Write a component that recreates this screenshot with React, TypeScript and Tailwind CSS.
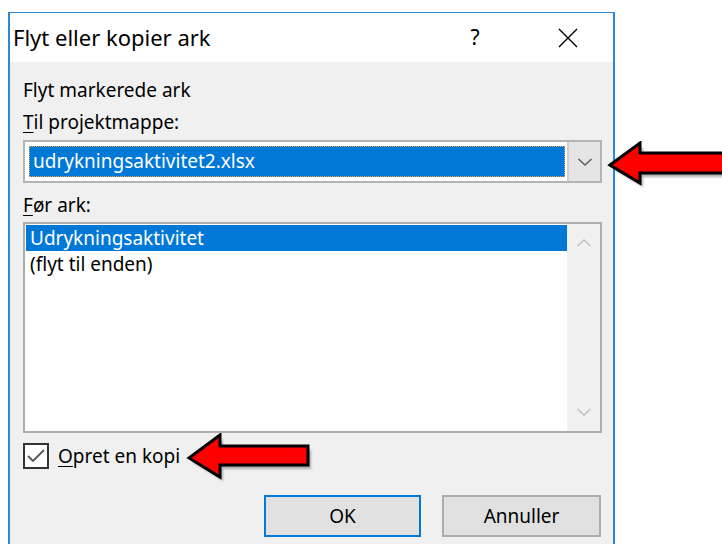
import React from "react";

function Chevron({ dir, color = "#606060" }: { dir: "up" | "down"; color?: string }) {
  return (
    <svg width="16" height="10" viewBox="0 0 16 10">
      <path
        d={dir === "down" ? "M1.5 2 L8 8 L14.5 2" : "M1.5 8 L8 2 L14.5 8"}
        fill="none"
        stroke={color}
        strokeWidth="1.6"
      />
    </svg>
  );
}

function Arrow({ id, w, h, tip, headX, shaftTop, shaftBottom }: { id: string; w: number; h: number; tip: number; headX: number; shaftTop: number; shaftBottom: number }) {
  const mid = h / 2;
  const pts = `${tip},${mid} ${headX},2 ${headX},${shaftTop} ${w - 6},${shaftTop} ${w - 6},${shaftBottom} ${headX},${shaftBottom} ${headX},${h - 6} `;
  return (
    <svg width={w} height={h} viewBox={`0 0 ${w} ${h}`}>
      <defs>
        <filter id={id} x="-10%" y="-20%" width="130%" height="150%">
          <feGaussianBlur stdDeviation="1.2" />
        </filter>
      </defs>
      <polygon points={pts} fill="#9a9a9a" transform="translate(3,4)" filter={`url(#${id})`} opacity="0.8" />
      <polygon points={pts} fill="#ff0000" stroke="#000" strokeWidth="3" strokeLinejoin="miter" />
    </svg>
  );
}

export default function App() {
  return (
    <div
      className="relative w-[722px] h-[544px] overflow-hidden bg-white text-black"
      style={{ fontFamily: '"Noto Sans", "Open Sans", sans-serif' }}
    >
      <div className="ml-[8px] mt-[12px] w-[607px] h-[540px] border-l-2 border-r-2 border-t border-[#2b88d8] flex flex-col">
        {/* title bar */}
        <div className="h-[49px] bg-white flex items-center pl-[3px] text-[22px]">
          <span className="flex-1">Flyt eller kopier ark</span>
          <span className="w-[20px] text-center text-[21px] mr-[72px]">?</span>
          <svg width="22" height="22" viewBox="0 0 22 22" className="mr-[34px]">
            <path d="M2 2 L20 20 M20 2 L2 20" stroke="#000" strokeWidth="1.4" fill="none" />
          </svg>
        </div>

        {/* body */}
        <div className="flex-1 bg-[#f0f0f0] pl-[13px] pr-[11px] pt-[16px] text-[19px] flex flex-col">
          <div className="h-[24px] leading-[24px]">Flyt markerede ark</div>
          <div className="h-[24px] leading-[24px] mt-[8px]">
            <span className="underline underline-offset-[3px]">T</span>il projektmappe:
          </div>

          {/* workbook combobox */}
          <div className="mt-[6px] h-[43px] border-2 border-[#b4b4b4] bg-white flex items-stretch">
            <div className="flex-1 p-[4px] pr-[2px]">
              <div className="h-full bg-[#0078d7] border border-dotted border-[#f0a040] text-white flex items-center pl-[3px] leading-none">
                udrykningsaktivitet2.xlsx
              </div>
            </div>
            <div className="w-[33px] bg-[#e5e5e5] border-l-2 border-[#cfcfcf] flex items-center justify-center">
              <Chevron dir="down" />
            </div>
          </div>

          <div className="h-[24px] leading-[24px] mt-[10px]">
            <span className="underline underline-offset-[3px]">F</span>ør ark:
          </div>

          {/* sheet list */}
          <div className="mt-[5px] h-[211px] border-2 border-[#adadad] bg-white flex">
            <div className="flex-1 pt-[1px] pl-[1px]">
              <div className="h-[26px] bg-[#0078d7] text-white flex items-center pl-[4px]">Udrykningsaktivitet</div>
              <div className="h-[26px] flex items-center pl-[4px]">(flyt til enden)</div>
            </div>
            <div className="w-[33px] bg-[#f0f0f0] flex flex-col items-center justify-between py-[14px]">
              <Chevron dir="up" color="#c2c2c2" />
              <Chevron dir="down" color="#c2c2c2" />
            </div>
          </div>

          {/* copy checkbox */}
          <div className="mt-[10px] h-[26px] flex items-center">
            <div className="w-[26px] h-[26px] border-2 border-[#333] bg-white flex items-center justify-center">
              <svg width="20" height="16" viewBox="0 0 20 16">
                <path d="M2 8 L7 13 L18 2" fill="none" stroke="#555" strokeWidth="1.8" />
              </svg>
            </div>
            <span className="ml-[9px]">
              <span className="underline underline-offset-[3px]">O</span>pret en kopi
            </span>
          </div>

          {/* buttons */}
          <div className="mt-[26px] flex justify-end gap-[21px] pr-[1px]">
            <button className="w-[157px] h-[42px] border-2 border-[#0078d7] bg-[#e1e1e1] text-[19px]">OK</button>
            <button className="w-[159px] h-[42px] border-2 border-[#adadad] bg-[#e1e1e1] text-[19px]">Annuller</button>
          </div>
        </div>
      </div>

      {/* annotation arrows */}
      <div className="absolute left-[607px] top-[141px]">
        <Arrow id="arrowShadowA" w={145} h={48} tip={3} headX={33} shaftTop={12} shaftBottom={32} />
      </div>
      <div className="absolute left-[186px] top-[433px]">
        <Arrow id="arrowShadowB" w={128} h={50} tip={3} headX={34} shaftTop={13} shaftBottom={32} />
      </div>
    </div>
  );
}
